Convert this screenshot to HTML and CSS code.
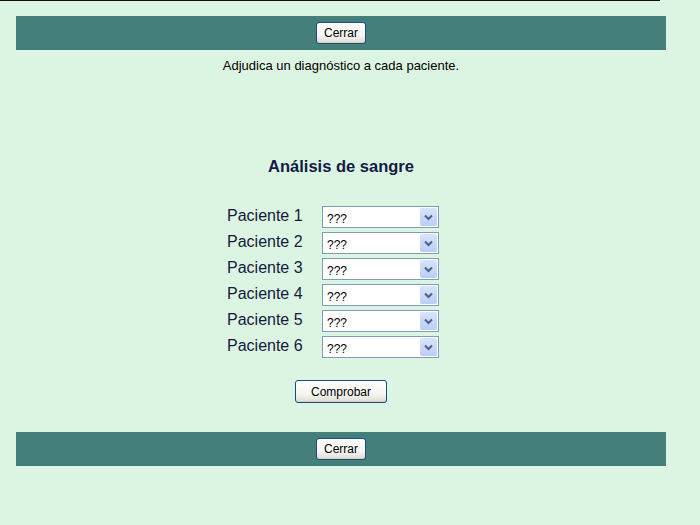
FILE: index.html
```html
<!DOCTYPE html>
<html lang="es">
<head>
<meta charset="utf-8">
<title>Análisis de sangre</title>
<link rel="stylesheet" href="styles.css">
</head>
<body>
<div class="topline"></div>
<div class="page">
  <div class="bar"><button class="btn" type="button">Cerrar</button></div>
  <p class="intro">Adjudica un diagnóstico a cada paciente.</p>
  <h1 class="title">Análisis de sangre</h1>
  <div class="quiz">
    <div class="rows">
      <label class="lbl">Paciente 1</label>
      <div class="sel"><select><option>???</option></select><span class="arrow"><svg width="17" height="18" viewBox="0 0 17 18"><path d="M5 7.5 L8.5 11 L12 7.5" fill="none" stroke="#4d6185" stroke-width="2"/></svg></span></div>
      <label class="lbl">Paciente 2</label>
      <div class="sel"><select><option>???</option></select><span class="arrow"><svg width="17" height="18" viewBox="0 0 17 18"><path d="M5 7.5 L8.5 11 L12 7.5" fill="none" stroke="#4d6185" stroke-width="2"/></svg></span></div>
      <label class="lbl">Paciente 3</label>
      <div class="sel"><select><option>???</option></select><span class="arrow"><svg width="17" height="18" viewBox="0 0 17 18"><path d="M5 7.5 L8.5 11 L12 7.5" fill="none" stroke="#4d6185" stroke-width="2"/></svg></span></div>
      <label class="lbl">Paciente 4</label>
      <div class="sel"><select><option>???</option></select><span class="arrow"><svg width="17" height="18" viewBox="0 0 17 18"><path d="M5 7.5 L8.5 11 L12 7.5" fill="none" stroke="#4d6185" stroke-width="2"/></svg></span></div>
      <label class="lbl">Paciente 5</label>
      <div class="sel"><select><option>???</option></select><span class="arrow"><svg width="17" height="18" viewBox="0 0 17 18"><path d="M5 7.5 L8.5 11 L12 7.5" fill="none" stroke="#4d6185" stroke-width="2"/></svg></span></div>
      <label class="lbl">Paciente 6</label>
      <div class="sel"><select><option>???</option></select><span class="arrow"><svg width="17" height="18" viewBox="0 0 17 18"><path d="M5 7.5 L8.5 11 L12 7.5" fill="none" stroke="#4d6185" stroke-width="2"/></svg></span></div>
    </div>
    <button class="btn btn-check" type="button">Comprobar</button>
  </div>
  <div class="bar bar-bottom"><button class="btn" type="button">Cerrar</button></div>
</div>
</body>
</html>
```
FILE: styles.css
```css
html, body {
  margin: 0;
  padding: 0;
  background: #dcf5e2;
  font-family: "Liberation Sans", Arial, sans-serif;
  height: 100%;
  overflow: hidden;
}
.topline {
  width: 660px;
  height: 1px;
  background: #111;
}
.page {
  width: 650px;
  margin-left: 16px;
  padding-top: 15px;
  display: flex;
  flex-direction: column;
  align-items: center;
}
.bar {
  align-self: stretch;
  height: 34px;
  background: #457f7c;
  display: flex;
  justify-content: center;
  align-items: center;
}
.btn {
  font-family: "Liberation Sans", Arial, sans-serif;
  font-size: 12px;
  color: #000;
  height: 22px;
  padding: 0 7px;
  min-width: 50px;
  border: 1px solid #1c4a82;
  border-radius: 3px;
  background: linear-gradient(#ffffff 0%, #f6f6f2 60%, #dedcd2 100%);
  box-shadow: inset 0 -1px 0 #d6d0c0;
}
.intro {
  margin: 8px 0 0;
  font-size: 13px;
  line-height: 15px;
  color: #000;
}
.title {
  margin: 84px 0 0;
  font-size: 16.5px;
  line-height: 19px;
  font-weight: bold;
  color: #131a46;
}
.quiz {
  margin-top: 28px;
  padding-right: 16px;
  display: flex;
  flex-direction: column;
  align-items: center;
}
.rows {
  display: grid;
  grid-template-columns: 95px 117px;
  grid-auto-rows: 26px;
}
.lbl {
  padding-top: 2px;
  font-size: 16px;
  line-height: 20px;
  color: #141a3c;
}
.sel {
  position: relative;
  margin-top: 2px;
  width: 117px;
  height: 22px;
}
.sel select {
  appearance: none;
  -webkit-appearance: none;
  box-sizing: border-box;
  width: 117px;
  height: 22px;
  margin: 0;
  border: 1px solid #7f9db9;
  border-radius: 0;
  background: #fff;
  font-family: "Liberation Sans", Arial, sans-serif;
  font-size: 12px;
  color: #000;
  padding: 3px 0 0 4px;
}
.arrow {
  position: absolute;
  right: 2px;
  top: 2px;
  width: 17px;
  height: 18px;
  background: linear-gradient(#d8e4fb, #b9cdf6);
  border-radius: 2px;
  pointer-events: none;
}
.arrow svg { display: block; }
.btn-check {
  margin-top: 20px;
  margin-left: 16px;
  width: 92px;
  height: 23px;
}
.bar-bottom {
  margin-top: 29px;
}
```
